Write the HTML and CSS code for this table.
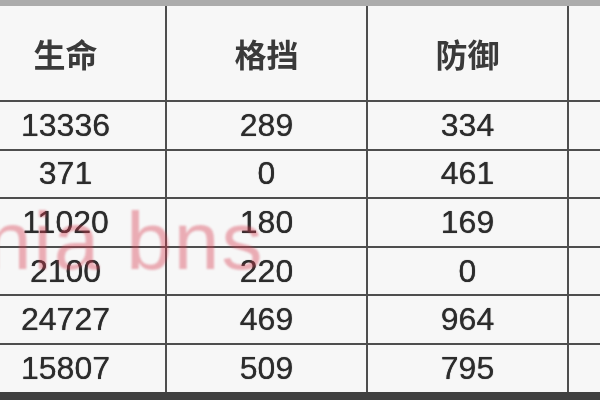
FILE: index.html
```html
<!DOCTYPE html>
<html lang="zh">
<head>
<meta charset="utf-8">
<link rel="stylesheet" href="styles.css">
</head>
<body>
<div class="sheet">
  <table class="stats">
    <colgroup><col class="c"><col class="c"><col class="c"><col class="c"></colgroup>
    <thead>
      <tr class="head"><th>生命</th><th>格挡</th><th>防御</th><th></th></tr>
    </thead>
    <tbody>
      <tr><td>13336</td><td>289</td><td>334</td><td></td></tr>
      <tr><td>371</td><td>0</td><td>461</td><td></td></tr>
      <tr><td>11020</td><td>180</td><td>169</td><td></td></tr>
      <tr><td>2100</td><td>220</td><td>0</td><td></td></tr>
      <tr><td>24727</td><td>469</td><td>964</td><td></td></tr>
      <tr class="last"><td>15807</td><td>509</td><td>795</td><td></td></tr>
    </tbody>
  </table>
  <div class="watermark">nia bns</div>
</div>
</body>
</html>
```
FILE: styles.css
```css
html, body {
  margin: 0;
  padding: 0;
  background: #f7f7f7;
  width: 600px;
  height: 400px;
  overflow: hidden;
}
.sheet {
  position: relative;
  width: 600px;
  height: 400px;
  overflow: hidden;
  border-top: 6px solid #acacac;
  box-sizing: border-box;
}
.stats {
  margin-left: -36px;
  border-collapse: collapse;
  table-layout: fixed;
  width: 804px;
  filter: blur(0.7px);
}
.stats .c {
  width: 201px;
}
.stats th, .stats td {
  border: 2px solid #4e4e4e;
  border-top: none;
  text-align: center;
  padding: 0;
  color: #2c2c2c;
}
.stats th {
  height: 94px;
  font-family: "Noto Sans CJK SC", "Noto Sans", sans-serif;
  font-size: 32px;
  font-weight: 700;
  color: #3a3a3a;
}
.stats td {
  height: 46.6px;
  font-family: "Liberation Sans", Arial, sans-serif;
  font-size: 32px;
  text-shadow: 0 0 0.8px #2c2c2c;
}
.stats tr.last td {
  border-bottom: 14px solid #404040;
}
.watermark {
  position: absolute;
  left: -14px;
  top: 188px;
  font-family: "Liberation Sans", Arial, sans-serif;
  font-size: 82px;
  color: rgba(215, 60, 80, 0.4);
  letter-spacing: 2px;
  white-space: nowrap;
  filter: blur(0.8px);
}
```
